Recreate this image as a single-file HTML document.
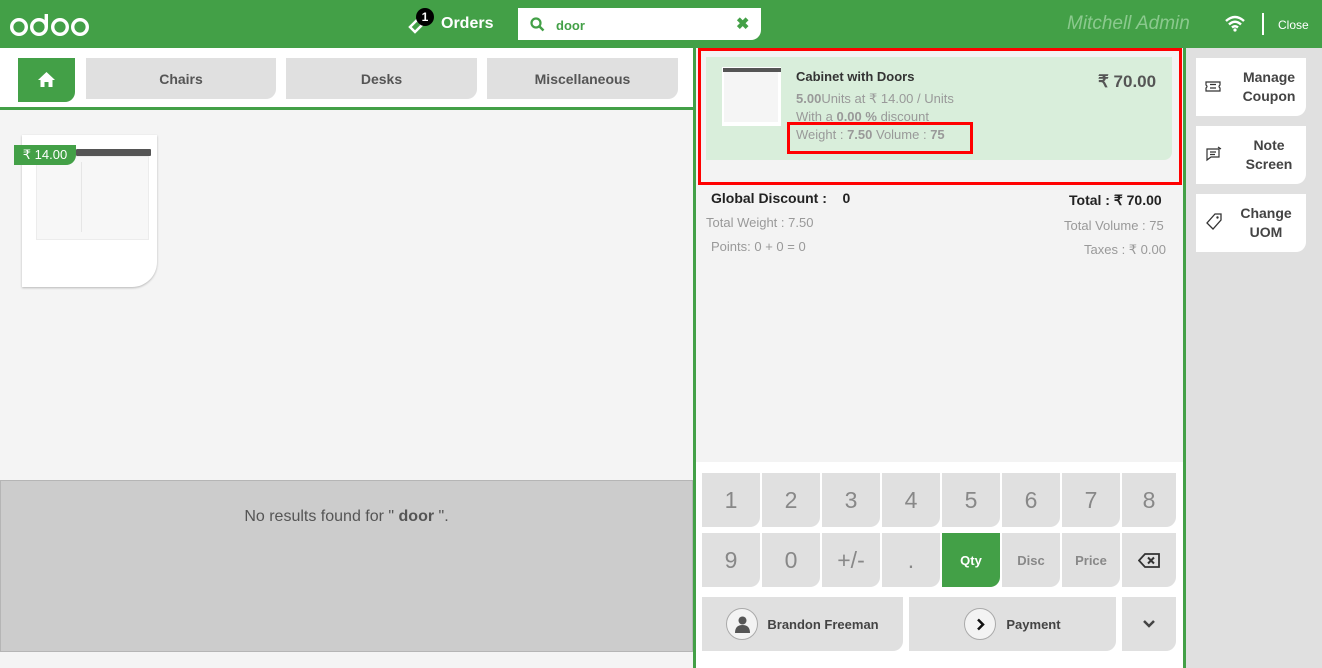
<!DOCTYPE html>
<html><head><meta charset="utf-8"><style>
*{box-sizing:border-box;margin:0;padding:0}
body{width:1322px;height:668px;overflow:hidden;font-family:"Liberation Sans",sans-serif;background:#f4f4f4;position:relative}
.abs{position:absolute}
.hdr{left:0;top:0;width:1322px;height:48px;background:#43a047}
.cat{top:58px;height:41px;background:#e0e0e0;border-radius:0 0 10px 0;color:#555;font-size:14px;font-weight:bold;display:flex;align-items:center;justify-content:center}
.key{width:58px;height:54px;background:#e0e0e0;border-radius:0 0 10px 0;color:#888;font-size:23px;display:flex;align-items:center;justify-content:center}
.side{left:1196px;width:110px;background:#fff;border-radius:0 0 10px 0;font-size:14px;font-weight:bold;color:#444;text-align:center;line-height:19px}
.g{color:#999}
</style></head><body>
<div class="abs hdr"></div>
<svg class="abs" style="left:10px;top:12px" width="80" height="26" viewBox="0 0 80 26"><g fill="none" stroke="#fff" stroke-width="3.4"><circle cx="9" cy="15" r="7.3"/><circle cx="29" cy="15" r="7.3"/><path d="M36.3 2 V15"/><circle cx="50" cy="15" r="7.3"/><circle cx="70" cy="15" r="7.3"/></g></svg>
<svg class="abs" style="left:407px;top:16px" width="18" height="18" viewBox="0 0 18 18"><path d="M3 11 L10 4 L15 9 L8 16 Z" fill="none" stroke="#fff" stroke-width="2.5"/></svg>
<div class="abs" style="left:416px;top:8px;width:18px;height:18px;border-radius:9px;background:#000;color:#fff;font-size:12px;font-weight:bold;text-align:center;line-height:18px">1</div>
<div class="abs" style="left:441px;top:15px;color:#fff;font-size:16px;font-weight:bold">Orders</div>
<div class="abs" style="left:518px;top:8px;width:243px;height:32px;background:#fff;border-radius:0 0 10px 0"></div>
<svg class="abs" style="left:530px;top:17px" width="15" height="15" viewBox="0 0 15 15"><circle cx="6" cy="6" r="4.5" fill="none" stroke="#43a047" stroke-width="2.2"/><path d="M9.5 9.5 L13.5 13.5" stroke="#43a047" stroke-width="2.5"/></svg>
<div class="abs" style="left:556px;top:18px;color:#43a047;font-size:13px;font-weight:bold">door</div>
<div class="abs" style="left:736px;top:14px;color:#43a047;font-size:16px;font-weight:bold">✖</div>
<div class="abs" style="left:1067px;top:13px;color:#8bc98e;font-size:19px;font-style:italic">Mitchell Admin</div>
<svg class="abs" style="left:1224px;top:15px" width="22" height="17" viewBox="0 0 22 17"><path d="M2 6 Q11 -2 20 6" fill="none" stroke="#fff" stroke-width="2.5"/><path d="M5 9.5 Q11 4 17 9.5" fill="none" stroke="#fff" stroke-width="2.5"/><path d="M8 12.5 Q11 10 14 12.5" fill="none" stroke="#fff" stroke-width="2.5"/><circle cx="11" cy="15" r="1.6" fill="#fff"/></svg>
<div class="abs" style="left:1262px;top:13px;width:2px;height:22px;background:#fff"></div>
<div class="abs" style="left:1278px;top:18px;color:#fff;font-size:12px">Close</div>

<div class="abs" style="left:0;top:48px;width:693px;height:62px;background:#fff;border-bottom:3px solid #43a047"></div>
<div class="abs" style="left:18px;top:58px;width:57px;height:44px;background:#43a047;border-radius:0 0 10px 0"></div>
<svg class="abs" style="left:38px;top:72px" width="17" height="15" viewBox="0 0 17 15"><path d="M8.5 0 L17 8 L14.5 8 L14.5 15 L10.5 15 L10.5 10 L6.5 10 L6.5 15 L2.5 15 L2.5 8 L0 8 Z" fill="#fff"/></svg>
<div class="abs cat" style="left:86px;width:190px">Chairs</div>
<div class="abs cat" style="left:286px;width:191px">Desks</div>
<div class="abs cat" style="left:487px;width:191px">Miscellaneous</div>
<div class="abs" style="left:22px;top:135px;width:135px;height:152px;background:#fff;border-radius:0 0 25px 0;box-shadow:0 1px 2px rgba(0,0,0,.25)"></div>
<div class="abs" style="left:76px;top:149px;width:75px;height:7px;background:#555;border-radius:1px"></div>
<div class="abs" style="left:36px;top:156px;width:113px;height:84px;background:#f7f7f7;border:1px solid #ececec"></div>
<div class="abs" style="left:81px;top:162px;width:1px;height:70px;background:#e6e6e6"></div>
<div class="abs" style="left:14px;top:145px;width:62px;height:20px;background:#43a047;border-radius:0 0 10px 0;color:#fff;font-size:13px;line-height:20px;text-align:center">₹ 14.00</div>
<div class="abs" style="left:0;top:480px;width:693px;height:172px;background:#ccc;border:1px solid #b5b5b5"></div>
<div class="abs" style="left:0;top:508px;width:693px;text-align:center;font-size:16px;color:#555">No results found for " <b>door</b> ".</div>

<div class="abs" style="left:693px;top:48px;width:3px;height:620px;background:#43a047"></div>
<div class="abs" style="left:696px;top:48px;width:487px;height:620px;background:#f3f3f3"></div>
<div class="abs" style="left:1183px;top:48px;width:3px;height:620px;background:#43a047"></div>
<div class="abs" style="left:1186px;top:48px;width:136px;height:620px;background:#e0e0e0"></div>

<div class="abs" style="left:698px;top:48px;width:484px;height:137px;border:3px solid #f00"></div>
<div class="abs" style="left:706px;top:57px;width:466px;height:103px;background:#d9eedb;border-radius:0 0 8px 0"></div>
<div class="abs" style="left:722px;top:67px;width:59px;height:59px;background:#fff"></div>
<div class="abs" style="left:723px;top:68px;width:58px;height:4px;background:#555"></div>
<div class="abs" style="left:724px;top:72px;width:54px;height:50px;background:#f5f5f5"></div>
<div class="abs" style="left:796px;top:69px;font-size:13px;font-weight:bold;color:#333">Cabinet with Doors</div>
<div class="abs" style="left:1098px;top:72px;font-size:17px;font-weight:bold;color:#555">₹ 70.00</div>
<div class="abs g" style="left:796px;top:91px;font-size:13px"><b>5.00</b>Units at ₹ 14.00 / Units</div>
<div class="abs g" style="left:796px;top:109px;font-size:13px;height:14px;overflow:hidden">With a <b>0.00 %</b> discount</div>
<div class="abs g" style="left:796px;top:127px;font-size:13px">Weight : <b>7.50</b> Volume : <b>75</b></div>
<div class="abs" style="left:787px;top:122px;width:186px;height:32px;border:3px solid #f00"></div>
<div class="abs" style="left:711px;top:190px;font-size:14px;font-weight:bold;color:#222">Global Discount : &nbsp;&nbsp; 0</div>
<div class="abs" style="left:1069px;top:192px;font-size:14px;font-weight:bold;color:#222">Total : ₹ 70.00</div>
<div class="abs g" style="left:706px;top:215px;font-size:13px">Total Weight : 7.50</div>
<div class="abs g" style="left:711px;top:239px;font-size:13px">Points: 0 + 0 = 0</div>
<div class="abs g" style="left:1064px;top:218px;font-size:13px">Total Volume : 75</div>
<div class="abs g" style="left:1084px;top:242px;font-size:13px">Taxes : ₹ 0.00</div>

<div class="abs" style="left:696px;top:462px;width:487px;height:206px;background:#fff"></div>
<div class="abs key" style="left:702px;top:473px">1</div>
<div class="abs key" style="left:762px;top:473px">2</div>
<div class="abs key" style="left:822px;top:473px">3</div>
<div class="abs key" style="left:882px;top:473px">4</div>
<div class="abs key" style="left:942px;top:473px">5</div>
<div class="abs key" style="left:1002px;top:473px">6</div>
<div class="abs key" style="left:1062px;top:473px">7</div>
<div class="abs key" style="left:1122px;top:473px;width:54px">8</div>
<div class="abs key" style="left:702px;top:533px">9</div>
<div class="abs key" style="left:762px;top:533px">0</div>
<div class="abs key" style="left:822px;top:533px">+/-</div>
<div class="abs key" style="left:882px;top:533px">.</div>
<div class="abs key" style="left:942px;top:533px;background:#43a047;color:#fff;font-size:13px;font-weight:bold">Qty</div>
<div class="abs key" style="left:1002px;top:533px;font-size:13px;font-weight:bold">Disc</div>
<div class="abs key" style="left:1062px;top:533px;font-size:13px;font-weight:bold">Price</div>
<div class="abs key" style="left:1122px;top:533px;width:54px"><svg width="22" height="15" viewBox="0 0 22 15"><path d="M1 7.5 L7 1 L21 1 L21 14 L7 14 Z" fill="none" stroke="#333" stroke-width="1.8"/><path d="M10 4.5 L16 10.5 M16 4.5 L10 10.5" stroke="#333" stroke-width="2"/></svg></div>
<div class="abs key" style="left:702px;top:597px;width:201px;font-size:13px;font-weight:bold;color:#444"><span style="display:inline-block;width:32px;height:32px;border-radius:16px;border:1px solid #aaa;background:#f3f3f3;margin-right:9px;position:relative"><svg style="position:absolute;left:8px;top:7px" width="15" height="17" viewBox="0 0 15 17"><circle cx="7.5" cy="4.5" r="4" fill="#555"/><path d="M0 17 Q0 9 7.5 9 Q15 9 15 17 Z" fill="#555"/></svg></span>Brandon Freeman</div>
<div class="abs key" style="left:909px;top:597px;width:207px;font-size:13px;font-weight:bold;color:#444"><span style="display:inline-block;width:32px;height:32px;border-radius:16px;border:1px solid #aaa;background:#f3f3f3;margin-right:10px;position:relative"><svg style="position:absolute;left:11px;top:9px" width="9" height="13" viewBox="0 0 9 13"><path d="M2 1.5 L7 6.5 L2 11.5" fill="none" stroke="#111" stroke-width="2.5"/></svg></span>Payment</div>
<div class="abs key" style="left:1122px;top:597px;width:54px;font-size:14px;color:#444"><svg width="12" height="8" viewBox="0 0 12 8"><path d="M1 1 L6 6 L11 1" fill="none" stroke="#444" stroke-width="2.5"/></svg></div>

<div class="abs side" style="top:58px;height:58px;padding:10px 0 0 36px">Manage<br>Coupon</div>
<div class="abs side" style="top:126px;height:58px;padding:10px 0 0 36px">Note<br>Screen</div>
<div class="abs side" style="top:194px;height:58px;padding:10px 0 0 30px">Change<br>UOM</div>
<svg class="abs" style="left:1205px;top:81px" width="16" height="11" viewBox="0 0 16 11"><path d="M1 1 H15 V4 Q13 5.5 15 7 V10 H1 V7 Q3 5.5 1 4 Z M5 3.5 H11 M5 7 H11" fill="none" stroke="#333" stroke-width="1.2"/></svg>
<svg class="abs" style="left:1206px;top:146px" width="16" height="16" viewBox="0 0 16 16"><path d="M1 3 H13 V11 H5 L1 14 Z M4 6 H10 M4 8.5 H9 M12 1 L15 3" fill="none" stroke="#333" stroke-width="1.2"/></svg>
<svg class="abs" style="left:1206px;top:213px" width="16" height="18" viewBox="0 0 16 18"><path d="M9 1 H15 V7 L7 16 L1 10 Z" fill="none" stroke="#333" stroke-width="1.3"/><circle cx="11.5" cy="4.5" r="1.2" fill="#333"/></svg>
</body></html>
